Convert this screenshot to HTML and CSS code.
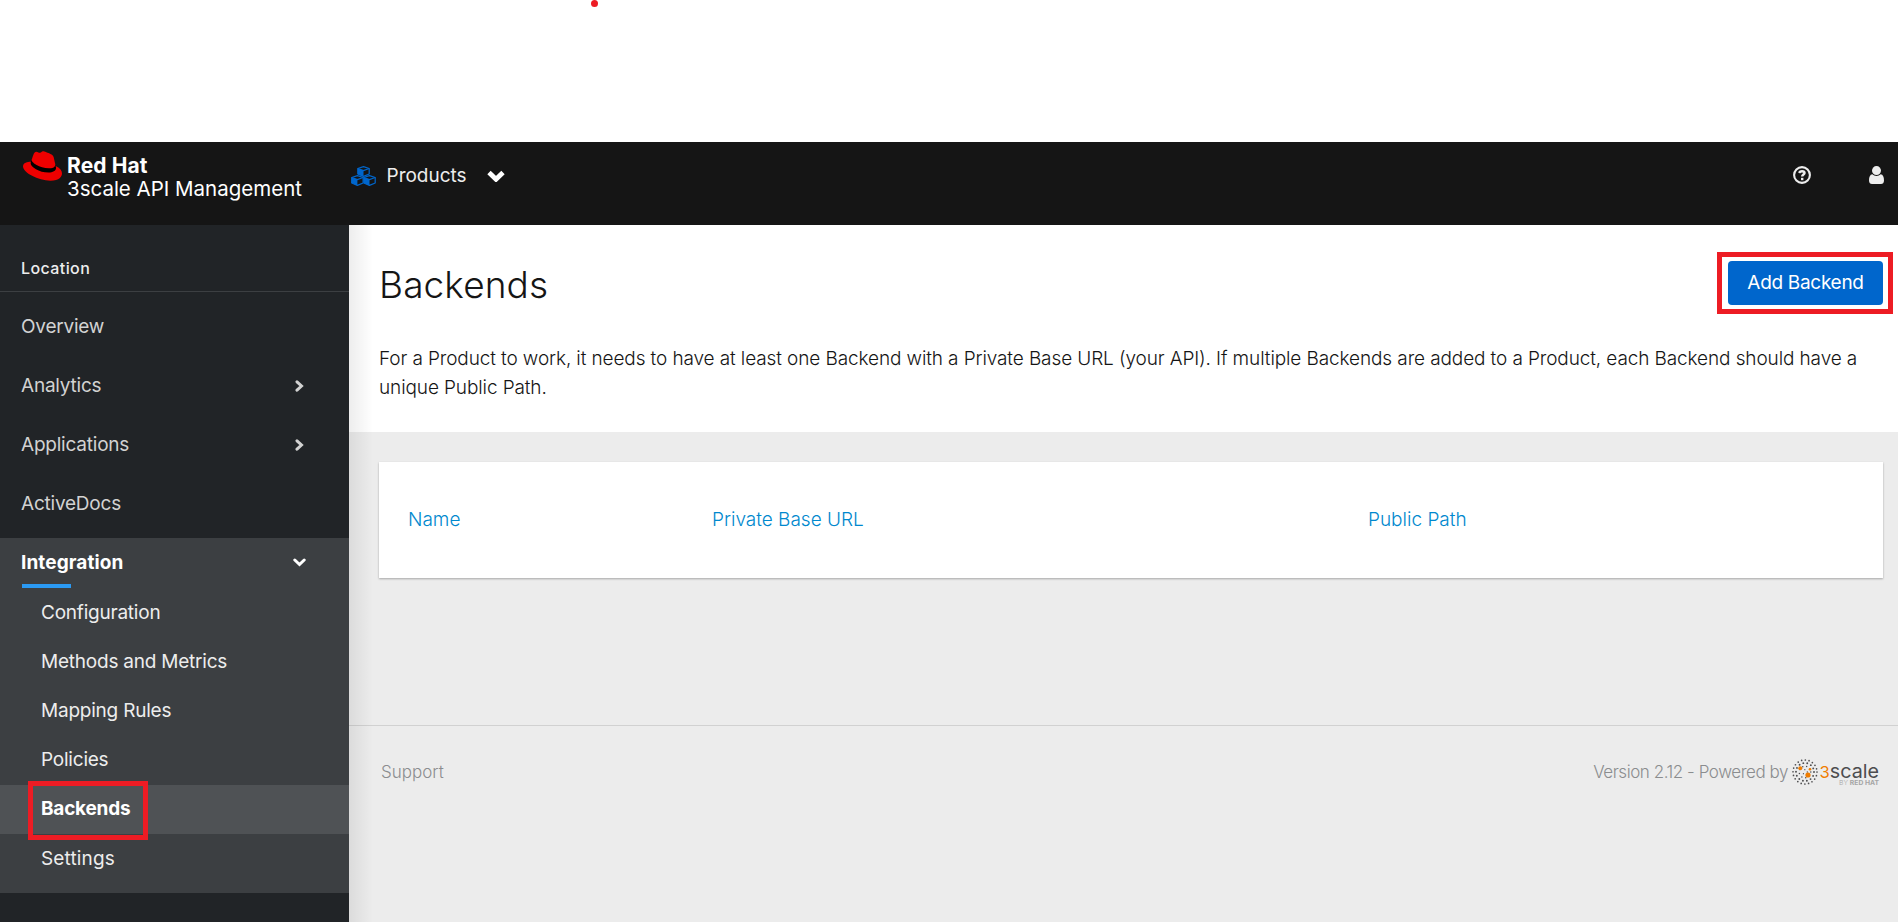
FILE: index.html
```html
<!DOCTYPE html>
<html lang="en">
<head>
<meta charset="utf-8">
<title>Backends - Red Hat 3scale API Management</title>
<link rel="stylesheet" href="styles.css">
</head>
<body>
<div class="top-space"><span class="dot"></span></div>
<header class="masthead">
  <a class="brand">
    <svg class="hat" viewBox="0 2.9 24 18.2"><path fill="#000" d="M5 9l.6-1.5 14 3.6.9 2.4-2 3.2-8-.8-6-4z"/><path fill="#e00" d="M16.009 13.386c1.577 0 3.86-.326 3.86-2.202a1.765 1.765 0 0 0-.04-.431l-.94-4.08c-.216-.898-.406-1.305-1.982-2.093-1.223-.625-3.888-1.658-4.676-1.658-.733 0-.947.946-1.822.946-.842 0-1.467-.706-2.255-.706-.757 0-1.25.515-1.63 1.576 0 0-1.06 2.99-1.197 3.424a.81.81 0 0 0-.028.245c0 1.162 4.577 4.974 10.71 4.974m4.101-1.435c.218 1.032.218 1.14.218 1.277 0 1.765-1.984 2.745-4.593 2.745-5.895.004-11.06-3.451-11.06-5.734a2.326 2.326 0 0 1 .19-.925C2.746 9.415 0 9.794 0 12.217c0 3.969 9.405 8.861 16.851 8.861 5.71 0 7.149-2.582 7.149-4.62 0-1.605-1.387-3.425-3.887-4.512"/></svg>
    <span class="brand-text"><b>Red Hat</b><span>3scale API Management</span></span>
  </a>
  <button class="context">
    <svg class="cubes" viewBox="0 0 25 20"><defs><g id="cube"><path d="M0 2.500 5.700.600l5.700 1.900v5.500l-5.700 2.400L0 8z" fill="#151515" stroke="#06c" stroke-width="1.200" stroke-linejoin="round"/><path d="M0 2.500l5.700 2.100v5.800L0 8z" fill="#06c"/><path d="M0 2.500l5.700 2.100 5.700-2.100" fill="none" stroke="#06c" stroke-width="1.200"/></g></defs><use href="#cube" x="6.800" y="0"/><use href="#cube" x=".7" y="9"/><use href="#cube" x="12.800" y="9"/></svg>
    <span>Products</span>
    <svg class="caret" viewBox="0 0 18 12"><path d="M2 2.500l7 6.800 7-6.800" fill="none" stroke="#fff" stroke-width="4.800"/></svg>
  </button>
  <div class="tools">
    <svg width="18" height="18" viewBox="0 0 18 18"><circle cx="9" cy="9" r="7.900" fill="none" stroke="#ededed" stroke-width="2.100"/><path d="M6 6.900Q7 5.200 9 5.200q2.500 0 2.500 1.900c0 1.500-2.300 1.500-2.300 3.400" fill="none" stroke="#ededed" stroke-width="2.500"/><path d="M8 11.800h2.400v2.400H8z" fill="#ededed"/></svg>
    <svg width="15" height="18" viewBox="0 0 15 18"><circle cx="7.500" cy="4.600" r="4.500" fill="#ededed"/><path d="M3.300 8.300C1 8.600 0 11 0 14.500 0 17 1.300 18 3 18h9c1.700 0 3-1 3-3.500 0-3.500-1-5.900-3.300-6.200Q10 9.900 7.500 9.900T3.300 8.300z" fill="#ededed"/></svg>
  </div>
</header>
<div class="page">
  <nav class="sidebar">
    <div class="location">Location</div>
    <ul class="nav">
      <li><span>Overview</span></li>
      <li><span>Analytics</span><svg class="chev" viewBox="0 0 9 12"><path d="M2 1.800l4.500 4.200L2 10.200"/></svg></li>
      <li><span>Applications</span><svg class="chev" viewBox="0 0 9 12"><path d="M2 1.800l4.500 4.200L2 10.200"/></svg></li>
      <li><span>ActiveDocs</span></li>
    </ul>
    <section class="group">
      <div class="group-title"><span>Integration</span><svg class="chev-down" viewBox="0 0 13 9"><path d="M1.800 2l4.700 4.500L11.200 2"/></svg></div>
      <ul class="subnav">
        <li><span>Configuration</span></li>
        <li><span>Methods and Metrics</span></li>
        <li><span>Mapping Rules</span></li>
        <li><span>Policies</span></li>
        <li class="current"><span>Backends</span><i class="mark mark-nav"></i></li>
        <li class="last"><span>Settings</span></li>
      </ul>
    </section>
  </nav>
  <main class="main">
    <section class="intro">
      <div class="intro-head">
        <h1>Backends</h1>
        <div class="action"><button class="primary">Add Backend</button><i class="mark mark-action"></i></div>
      </div>
      <p><span>For a Product to work, it needs to have at least one Backend with a Private Base URL (your API). If multiple Backends are added to a Product, each Backend should have a</span><br><span>unique Public Path.</span></p>
    </section>
    <section class="card">
      <span>Name</span><span>Private Base URL</span><span>Public Path</span>
    </section>
    <footer class="footer">
      <span>Support</span>
      <div class="powered">
        <span>Version 2.12 - Powered by</span>
        <svg class="logo" width="91" height="28" viewBox="0 0 91 28">
          <g fill="none" stroke="#4d4d4f" stroke-linecap="round">
            <circle cx="13" cy="14" r="12" stroke-width="1.700" stroke-dasharray="0 3.770"/>
            <circle cx="13" cy="14" r="9" stroke-width="1.900" stroke-dasharray="0 4.040"/>
            <circle cx="13" cy="14" r="5.800" stroke-width="1.500" stroke-dasharray="0 4.050"/>
            <circle cx="13" cy="14" r="2.300" stroke-width="1.300" stroke-dasharray="0 4.800"/>
          </g>
          <g fill="#f07d00"><circle cx="8.300" cy="10.300" r="2"/><circle cx="16" cy="17" r="2.600"/><circle cx="18" cy="11.300" r="1.300"/></g>
          <text class="word" x="27.500" y="19.800" textLength="59.500" lengthAdjust="spacingAndGlyphs"><tspan fill="#f07d00" font-size="16">3</tspan><tspan>scale</tspan></text>
          <text class="byline" x="47" y="27" textLength="40" lengthAdjust="spacingAndGlyphs">BY <tspan font-weight="700">RED HAT</tspan></text>
        </svg>
      </div>
    </footer>
  </main>
</div>
</body>
</html>
```
FILE: styles.css
```css
* { box-sizing: border-box; }
body { margin: 0; width: 1898px; height: 922px; overflow: hidden; background: #fff; font-family: Inter, sans-serif; font-size: 19px; color: #151515; }
ul { list-style: none; margin: 0; padding: 0; }
button { border: 0; background: none; font: inherit; padding: 0; }
svg { display: block; flex: none; }
span, b { white-space: nowrap; }
.top-space { height: 142px; padding-left: 591px; }
.dot { display: block; width: 7px; height: 7px; border-radius: 50%; background: #ed1c24; }
.masthead { height: 83px; background: #151515; color: #fff; display: flex; align-items: flex-start; }
.brand { width: 349px; padding: 9px 0 0 22.5px; display: flex; gap: 5.5px; }
.hat { width: 39px; height: 30px; }
.brand-text { display: flex; flex-direction: column; align-items: flex-start; font-size: 20.5px; line-height: 23px; padding-top: 3px; }
.brand-text b { font-size: 21px; letter-spacing: 0.1px; }
.context { display: flex; align-items: center; color: #ededed; padding-top: 21px; height: 46px; }
.cubes { width: 25px; height: 20px; margin-left: 2px; margin-right: 10.5px; }
.caret { width: 18px; height: 12px; margin-left: 20.5px; }
.tools { margin-left: auto; display: flex; gap: 58px; padding: 24px 14px 0 0; }
.page { display: flex; height: 697px; }
.sidebar { width: 349px; background: #212427; color: #d2d2d2; flex: none; letter-spacing: -0.22px; }
.location { height: 67px; border-bottom: 1px solid #3c3f42; padding: 31px 21px 0; font-size: 16px; line-height: 24px; font-weight: 500; color: #ededed; letter-spacing: 0.4px; }
.nav { padding: 5px 0; }
.nav li { height: 59px; display: flex; align-items: center; padding: 0 45px 0 21px; justify-content: space-between; }
.chev { width: 9px; height: 12px; }
.chev path, .chev-down path { fill: none; stroke: #d2d2d2; stroke-width: 3; stroke-linecap: round; }
.group { background: #3c3f42; color: #ededed; padding-bottom: 10px; }
.group-title { height: 51px; display: flex; align-items: center; justify-content: space-between; padding: 0 43px 2px 21px; font-weight: 700; color: #fff; position: relative; letter-spacing: 0.1px; }
.group-title::after { content: ""; position: absolute; left: 22px; top: 46px; width: 49px; height: 4px; background: #2b9af3; }
.chev-down { width: 13px; height: 9px; }
.chev-down path { stroke: #fff; }
.subnav li { height: 49px; display: flex; align-items: center; padding: 0 41px 3px; position: relative; }
.subnav .current { background: #4f5255; font-weight: 700; color: #fff; }
.subnav .last { padding-bottom: 1px; letter-spacing: 0.15px; }
.mark { position: absolute; border: 5px solid #ed1c24; }
.mark-nav { left: 28px; top: -4px; width: 120px; height: 59px; z-index: 2; }
.main { flex: 1; background: #ececec; position: relative; }
.main::before { content: ""; position: absolute; left: 0; top: 0; bottom: 0; width: 24px; background: linear-gradient(90deg, rgba(0,0,0,.07), rgba(0,0,0,0)); }
.intro { height: 207px; background: #fff; padding: 36px 15px 0 30px; }
.intro-head { display: flex; justify-content: space-between; }
h1 { margin: 2px 0 0; font-size: 37px; line-height: 44px; font-weight: 300; letter-spacing: 0.1px; }
.action { position: relative; height: 44px; }
.primary { width: 155px; height: 44px; border-radius: 4px; background: #06c; color: #fff; letter-spacing: -0.3px; padding-bottom: 1px; }
.mark-action { left: -11px; top: -9px; width: 176px; height: 62px; }
p { margin: 37px 0 0; line-height: 29px; font-weight: 300; letter-spacing: -0.11px; }
.card { margin: 30px 15px 0 30px; height: 116px; background: #fff; box-shadow: 0 1px 2px rgba(0,0,0,.3); padding: 0 29px 2px; display: grid; grid-template-columns: 304px 656px 1fr; align-items: center; color: #0088ce; font-weight: 300; }
.footer { margin-top: 147px; border-top: 1px solid #d1d1d1; display: flex; justify-content: space-between; padding: 32px 15px 0 32px; color: #8b8d8f; font-size: 17px; line-height: 29px; font-weight: 300; }
.powered { display: flex; gap: 4px; letter-spacing: -0.45px; }
.logo { letter-spacing: 0; }
.word { font-size: 19px; font-weight: 400; fill: #4d4d4f; }
.byline { font-size: 6.5px; fill: #a5a5a5; }
```
